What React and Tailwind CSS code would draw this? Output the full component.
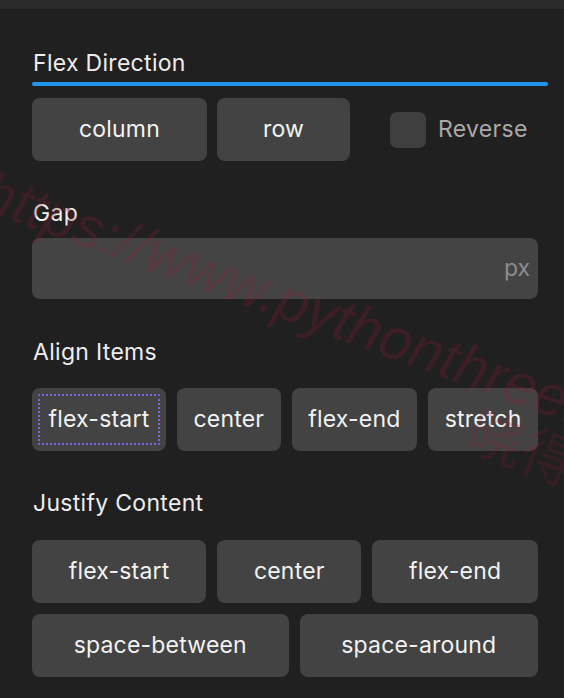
import { useState } from 'react'

const btn = 'h-[63px] rounded-[8px] bg-[#434343] text-[#f2f2f2] text-[23px] tracking-[0.2px] flex items-center justify-center'

function App() {
    const [direction, setDirection] = useState('column')
    const [align, setAlign] = useState('flex-start')

    return (
        <div className="relative w-[564px] h-[698px] overflow-hidden bg-[#202020] font-['Inter','Noto_Sans',sans-serif]">
            <div className="h-[10px] bg-[#2b2b2b] border-b border-[#1b1b1b]" />

            <div className="pl-[32px] pr-[26px] pt-[39px]">
                {/* tabs header */}
                <div className="text-[23px] leading-[28px] tracking-[0.3px] text-[#ededed] pl-[1px]">Flex Direction</div>
                <div className="mt-[5px] h-[4px] w-[516px] rounded-full bg-[#2196ee]" />

                <div className="mt-[12px] flex items-center gap-[10px]">
                    <button onClick={() => setDirection('column')} className={btn + ' w-[175px]'}>column</button>
                    <button onClick={() => setDirection('row')} className={btn + ' w-[133px]'}>row</button>
                    <label className="ml-[30px] flex items-center gap-[12px] text-[23px] tracking-[0.3px] text-[#a9a9a9]">
                        <span className="w-[36px] h-[36px] rounded-[7px] bg-[#3f3f3f]" />
                        Reverse
                    </label>
                </div>

                <div className="mt-[38px] text-[23px] leading-[28px] tracking-[0.3px] text-[#ededed] pl-[1px]">Gap</div>
                <div className="mt-[11px] h-[61px] rounded-[8px] bg-[#444444] flex items-center justify-end pr-[8px]">
                    <span className="text-[23px] text-[#8d8d8d]">px</span>
                </div>

                <div className="mt-[39px] text-[23px] leading-[28px] tracking-[0.3px] text-[#ededed] pl-[1px]">Align Items</div>
                <div className="mt-[22px] flex gap-[11px]">
                    {['flex-start', 'center', 'flex-end', 'stretch'].map((a) => (
                        <button
                            key={a}
                            onClick={() => setAlign(a)}
                            className={btn + ' flex-auto px-[14px] ' + (a === align ? 'outline-2 outline-dotted outline-[#7b68e6] outline-offset-[-8px]' : '')}
                        >
                            {a}
                        </button>
                    ))}
                </div>

                <div className="mt-[38px] text-[23px] leading-[28px] tracking-[0.3px] text-[#ededed] pl-[1px]">Justify Content</div>
                <div className="mt-[23px] flex flex-col gap-[11px]">
                    <div className="flex gap-[11px]">
                        <button className={btn + ' flex-auto px-[30px]'}>flex-start</button>
                        <button className={btn + ' flex-auto px-[30px]'}>center</button>
                        <button className={btn + ' flex-auto px-[30px]'}>flex-end</button>
                    </div>
                    <div className="flex gap-[11px]">
                        <button className={btn + ' flex-auto px-[30px]'}>space-between</button>
                        <button className={btn + ' flex-auto px-[30px]'}>space-around</button>
                    </div>
                </div>
            </div>

            {/* watermark */}
            <div className="pointer-events-none absolute left-[0px] top-[148px] origin-top-left rotate-[20deg] whitespace-nowrap text-[58px] italic text-[#8a1c30]/25 font-['Liberation_Sans',sans-serif]">
                https://www.pythonthree.com
            </div>
            <div className="pointer-events-none absolute left-[486px] top-[386px] origin-top-left rotate-[20deg] whitespace-nowrap text-[56px] text-[#8a1c30]/20 font-['Noto_Sans_CJK_SC',sans-serif]">
                晓得博客
            </div>
        </div>
    )
}

export default App
